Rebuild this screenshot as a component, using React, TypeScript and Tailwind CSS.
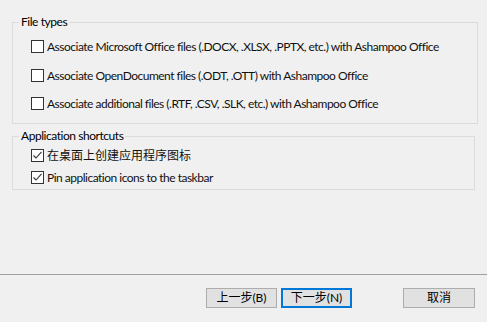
import * as React from "react";

const font = { fontFamily: 'Lato, "Noto Sans CJK SC", sans-serif' };

function Check({ checked, label, cjk }: { checked?: boolean; label: string; cjk?: boolean }) {
  return (
    <label className="flex items-center h-[13px] text-[12px] leading-none text-[#111]">
      <span className="w-[13px] h-[13px] border border-[#333] bg-white flex-none flex items-center justify-center">
        {checked && (
          <svg width="11" height="11" viewBox="0 0 11 11">
            <path d="M1.5 5.5 L4 8 L9.5 1.8" fill="none" stroke="#333" strokeWidth="1.1" />
          </svg>
        )}
      </span>
      <span className={cjk ? "ml-[3px] whitespace-nowrap" : "ml-[3px] whitespace-nowrap tracking-[-0.5px]"}>
        {label}
      </span>
    </label>
  );
}

export default function App() {
  return (
    <div className="w-[487px] h-[322px] bg-[#f0f0f0] flex flex-col text-black" style={font}>
      <div className="flex-1 pl-[12px] pt-[14px]">
        {/* file types */}
        <fieldset className="w-[466px] h-[110px] border border-[#dcdcdc] pl-[6px] pt-[10px]">
          <legend className="px-[2px] text-[12px] leading-[16px] tracking-[-0.45px]">File types</legend>
          <div className="flex flex-col ml-[12px]">
            <Check label="Associate Microsoft Office files (.DOCX, .XLSX, .PPTX, etc.) with Ashampoo Office" />
            <div className="mt-[16px]">
              <Check label="Associate OpenDocument files (.ODT, .OTT) with Ashampoo Office" />
            </div>
            <div className="mt-[15px]">
              <Check label="Associate additional files (.RTF, .CSV, .SLK, etc.) with Ashampoo Office" />
            </div>
          </div>
        </fieldset>

        {/* shortcuts */}
        <fieldset className="mt-[4px] w-[463px] h-[62px] border border-[#dcdcdc] pl-[6px] pt-[5px]">
          <legend className="px-[2px] text-[12px] leading-[16px] tracking-[-0.45px]">Application shortcuts</legend>
          <div className="flex flex-col gap-[9px] ml-[12px]">
            <Check checked cjk label="在桌面上创建应用程序图标" />
            <Check checked label="Pin application icons to the taskbar" />
          </div>
        </fieldset>
      </div>

      <div className="h-[48px] border-t border-[#a0a0a0] flex items-start pt-[13px] pl-[206px] text-[12px]">
        <button className="w-[71px] h-[20px] border border-[#adadad] bg-[#e1e1e1] leading-none">上一步(B)</button>
        <button className="ml-[4px] w-[71px] h-[20px] border-2 border-[#0078d7] bg-[#e1e1e1] leading-none">下一步(N)</button>
        <button className="ml-[51px] w-[72px] h-[20px] border border-[#adadad] bg-[#e1e1e1] leading-none">取消</button>
      </div>
    </div>
  );
}
